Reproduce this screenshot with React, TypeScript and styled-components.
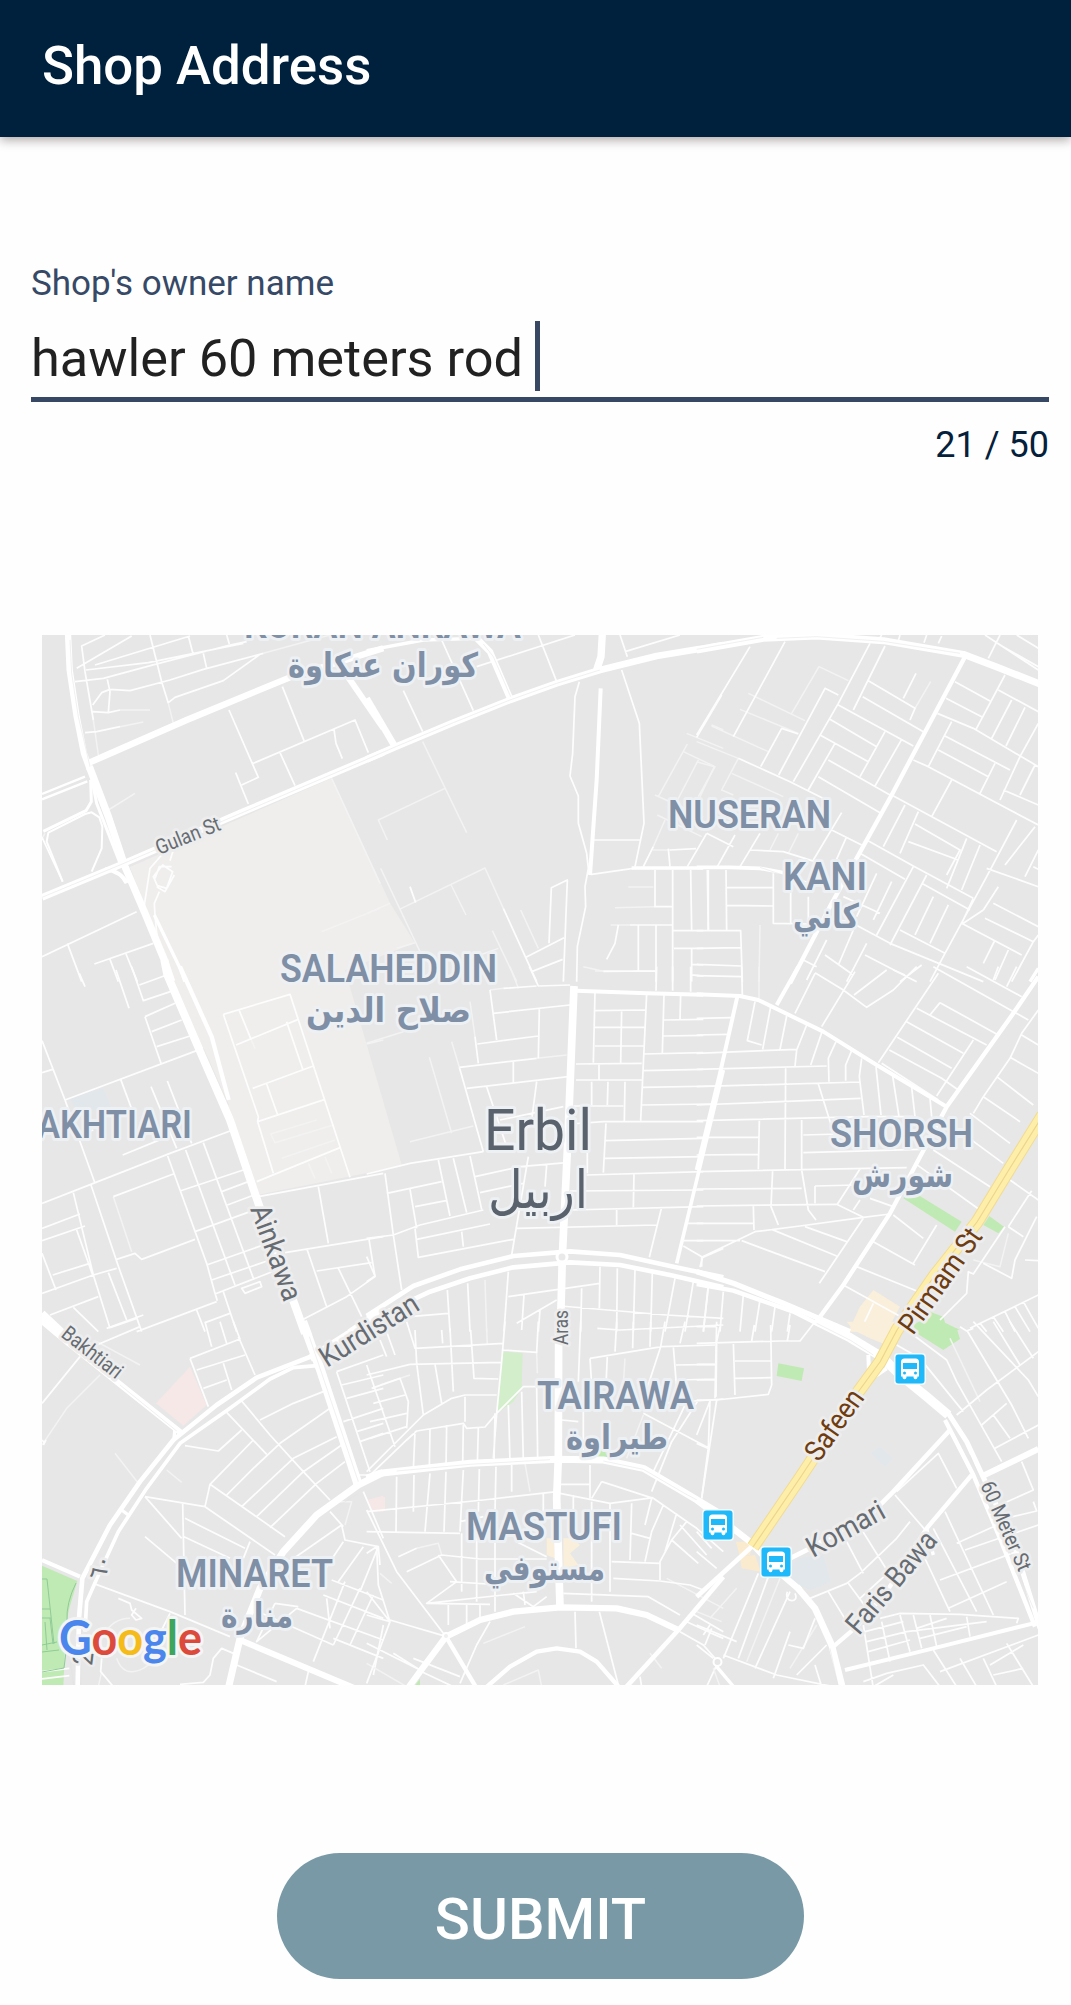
import React from "react";
import styled, { createGlobalStyle } from "styled-components";

const GlobalStyle = createGlobalStyle`
  * { box-sizing: border-box; }
  body { margin: 0; background: #fefefe; font-family: Roboto, "DejaVu Sans", sans-serif; }
`;

const Screen = styled.main`
  display: flex;
  flex-direction: column;
  height: 2005px;
  overflow: hidden;
  background: #fefefe;
`;

const TopBar = styled.header`
  flex: none;
  height: 137px;
  padding: 36px 42px 0;
  background: #00213d;
  box-shadow: 0 3px 10px rgba(30, 10, 10, 0.36);
`;

const Title = styled.h1`
  margin: 0;
  color: #fff;
  font-size: 52.8px;
  font-weight: 500;
  line-height: 60px;
`;

const Field = styled.section`
  display: flex;
  flex-direction: column;
  margin: 127px 22px 0 31px;
`;

const FieldLabel = styled.label`
  color: #364966;
  font-size: 35px;
  line-height: 40px;
`;

const InputRow = styled.div`
  display: flex;
  align-items: flex-start;
  height: 98px;
  padding-top: 17px;
  border-bottom: 5px solid #364863;
`;

const InputText = styled.span`
  padding-top: 2px;
  color: #212121;
  font-size: 52.3px;
  line-height: 70px;
  white-space: pre;
`;

const Caret = styled.span`
  width: 5px;
  height: 70px;
  margin-left: -1px;
  background: #384863;
`;

const Counter = styled.span`
  align-self: flex-end;
  margin-top: 23px;
  color: #04203a;
  font-size: 36px;
  line-height: 40px;
`;

const MapFrame = styled.section`
  flex: none;
  width: 996px;
  height: 1050px;
  margin: 170px 0 0 42px;
  overflow: hidden;
  background: #e7e7e7;
`;

const MapSvg = styled.svg`
  display: block;
  width: 996px;
  height: 1050px;
`;

const Label = styled.text`
  fill: #7f8fa6;
  stroke: #eef1f4;
  stroke-width: 6px;
  stroke-linejoin: round;
  paint-order: stroke;
  font-family: Roboto, sans-serif;
  font-weight: 600;
  font-size: 38.4px;
`;

const ArabicLabel = styled(Label)`
  font-family: "DejaVu Sans", sans-serif;
  font-weight: 700;
  font-size: 34px;
`;

const StreetLabel = styled(Label)<{ $size: number; $tone?: string }>`
  fill: ${(p) => p.$tone ?? "#666c72"};
  stroke: #ededee;
  font-weight: 400;
  font-size: ${(p) => p.$size}px;
`;

const CityLabel = styled(Label)`
  fill: #5a626d;
  font-weight: 400;
  font-size: 57px;
`;

const ArabicCity = styled(ArabicLabel)`
  fill: #5a626d;
  font-weight: 400;
  font-size: 53px;
`;

const Logo = styled.text`
  font-family: Lato, sans-serif;
  font-weight: 700;
  font-size: 47px;
  stroke: #f5f5f5;
  stroke-width: 6px;
  stroke-linejoin: round;
  paint-order: stroke;
`;

const SubmitButton = styled.button`
  flex: none;
  align-self: flex-start;
  width: 527px;
  height: 126px;
  margin: 168px 0 0 277px;
  padding: 6px 0 0;
  border: 0;
  border-radius: 63px;
  background: #7899a5;
  color: #fff;
  font-family: Roboto, sans-serif;
  font-size: 58px;
  font-weight: 500;
  line-height: 120px;
`;

type Area = [string, string];
type Road = [number, string];
interface Tile {
  x: number;
  y: number;
  areas?: Area[];
  minor: string;
  faint?: string;
  roads: Road[];
  seams?: string;
}

const GREEN = "#c0eab3";
const SAND = "#faefda";
const PINK = "#f7e8e8";
const WATER = "#e2e7ec";

/* Each tile is drafted on a grid three times finer than the map itself. */
const tiles: Tile[] = [
  {
    x: 30,
    y: 620,
    minor:
      "M225 45L155 78L165 155L190 300M140 145L305 48M195 135L480 48M168 150L355 128L640 70M135 185L220 175L375 133L600 75L650 65M188 255L215 218L240 208L300 212L420 180L520 148L700 100M360 45L395 185L415 250M415 248L435 232L580 182L690 103M475 48L490 105M590 45L598 72M520 100L530 145M232 178L240 215L235 278M188 275L235 278L270 270M165 338L200 335L270 320M597 270L685 472L635 495M617 458L655 552M757 200L822 362M665 432L975 300L1015 398M750 398L795 497M912 328L918 370L937 416M36 1010L320 875M112 970L155 1085M193 1032L370 970M240 1018L265 1085M288 1002L322 1085M395 705L360 745L343 855M430 690L420 722M398 735L428 755L410 805L382 797L370 770ZM375 775L388 740L425 740M380 800L405 815L433 765M388 815L373 850L375 885L384 980",
    faint:
      "M190 300L205 405M270 270L360 270M270 320L340 306M415 250L430 310M235 570L315 520M905 475L1050 790M875 935L1050 865M700 100L900 45M36 655L45 640",
    roads: [
      [19, "M114 40L119 150L140 290L162 400L180 450"],
      [22, "M178 440L235 590L285 740L345 880L403 1020L425 1085"],
      [9, "M180 450L200 550L270 730"],
      [19, "M178 428L230 405L470 300L780 172L1060 85"],
      [20, "M36 832L270 735L640 575L1060 397"],
      [7, "M36 522L165 470M36 538L172 484"],
      [9, "M182 480L184 545L168 572L40 634"],
      [6, "M98 785L50 665L55 638L165 582L185 577L208 592L217 620L215 685L185 755"],
      [5, "M36 652L98 785"],
      [18, "M950 165L1060 325"],
      [12, "M225 748Q275 755 290 790"],
      [10, "M373 885L450 1045L465 1085"],
    ],
    seams: "M36 832L270 735L1060 397M120 60L125 160L145 290L180 440",
  },
  {
    x: 370,
    y: 620,
    minor:
      "M628 185L615 230L608 400L600 468L625 528L625 610L650 700L655 745L645 800L647 860L622 980L620 1085M755 150L808 310L822 610L795 740M668 660L812 660M665 763L790 745M505 45L560 185M320 140L615 45M750 45L772 110M765 95L930 45M100 212L158 335M215 60L310 272M120 800L137 848M537 970L544 803L592 780L580 1085M465 1013L582 953M485 1055L578 1018M820 740L850 680M952 740L1010 640M900 690L978 686M895 686L900 740M980 352L1055 225M855 750L855 860L908 860M908 750L908 1085M780 915L908 915M745 915L735 970L710 1018M805 915L805 1052M858 915L858 1085M790 1053L855 1053M962 750L965 932M1015 750L1015 932M908 932L1000 932M912 985L1000 985M965 985L965 1085M965 1033L1000 1035M965 1065L1000 1068M400 865L500 1085",
    faint:
      "M158 365L290 638M225 505L25 600L52 660M88 868L345 744L400 865M32 745L150 995M242 792L288 885M452 870L505 985M367 932L440 1085M385 985L330 1005M850 680L885 600M848 690L900 690M950 340L1060 385M1025 315L1060 330M952 372L865 530M940 395L1035 440L985 530M985 420L920 545M855 525L1000 590M862 585L995 650M735 863L855 860M775 801L850 801M722 915L780 915M675 1053L790 1053M-10 880L60 850M80 985L135 968",
    roads: [
      [20, "M-10 418L80 379L250 308L420 240L560 190L690 150L860 108L1060 75"],
      [20, "M-10 235L72 375"],
      [19, "M320 55L360 95L420 235"],
      [10, "M-10 92L160 60L320 55"],
      [22, "M697 40L693 110L680 150"],
      [12, "M692 205L680 480L660 765"],
      [11, "M785 744L1000 744"],
    ],
    seams: "M-10 418L80 379L250 308L420 240L560 190L690 150M340 72L370 110L422 230M985 75L1060 75",
  },
  {
    x: 700,
    y: 620,
    minor:
      "M150 80L-10 345M255 65L100 350M510 70L415 250L280 485M555 78L460 270M236 465L375 205L415 225M182 440L245 325L295 342M115 415L270 485L390 545M505 182L645 265L630 300M610 235L648 160M488 230L670 335M415 255L640 378M390 298L530 380M360 345L505 425M385 420L570 525M355 470L540 578M405 370L325 510M555 335L480 470M605 358L525 498M425 578L340 720M395 630L485 675M440 650L400 740M765 185L870 243M738 235L845 290M712 280L820 325L1015 440M915 165L828 328M895 210L1015 275M935 240L875 355M975 262L918 378M1015 310L960 410L900 540M1005 435L960 525M640 420L685 440L755 305M735 348L930 450M715 390L865 470M685 440L1015 615M885 430L840 520M910 510L1015 555M755 480L695 590M575 525L890 695M950 600L860 770L735 1000M1005 620L915 735M1015 690L975 770M655 575L600 700M615 555L550 680M645 612L780 690L740 765M625 665L775 720M500 660L640 738L820 835M800 655L740 805M840 675L785 810M860 745L1015 800M665 790L810 870M895 800L850 870M880 850L1015 920M855 895L1000 965M785 910L965 1005M1000 965L935 1085M1015 945L1000 965M885 960L850 1030M640 740L530 945M680 765L570 975M480 700L615 778M700 830L645 945M745 855L690 970M600 930L735 1000L690 1085M430 830L540 880M530 760L470 890M575 785L520 900M450 905L570 970L850 1085M500 970L440 1085M495 1005L650 1085M380 960L320 1080M665 1035L600 1085M310 1020L350 1040M375 1005L460 1065M925 990L885 1080M410 900L450 905M460 930L415 1035M220 760L220 910L325 912L325 830M272 790L272 910M78 750L80 930M22 750L25 930M80 803L220 803M80 856L220 858M-10 932L122 932L127 1085M-10 985L122 983M-10 1033L125 1038M52 740L105 645M120 740L180 640M150 690L250 695L345 725M545 45L535 60M600 45L595 62M680 45L672 68M725 48L715 70M900 45L865 115M900 75L1015 140M855 45L1015 150M950 45L1015 85M850 870L790 910M820 835L785 910M1000 740L1015 748M20 640L100 680",
    faint:
      "M275 280L357 140L445 182M145 220L315 302M120 268L295 340M35 318L205 395M-10 365L115 415M-10 425L43 440L0 530M115 415L65 510L100 525M95 460L250 530M645 265L692 185M180 915L177 1085M210 690L235 640M265 700L295 640",
    roads: [
      [21, "M-10 90L190 55L350 48L550 62L790 103L900 145L1020 192"],
      [13, "M795 110L575 525L395 850L270 1090"],
      [11, "M-10 742L90 742L180 745L245 757L330 795"],
      [10, "M1015 1045L990 1085"],
    ],
    seams: "M-10 88L190 52M230 55L350 50L550 64L780 100M180 742L330 792",
  },
  {
    x: 30,
    y: 970,
    minor:
      "M36 212L105 390L195 640M36 308L68 298M105 390L500 242M272 328L310 430M148 10L165 50M258 0L297 115M305 -10L340 92L430 62M328 45L410 15M345 140L435 100M345 140L393 280M365 185L455 150M380 230L480 198M363 350L440 535M412 333L485 520M278 555L400 505M36 700L190 640L420 550L600 483M130 668L190 915L240 1075M183 645L262 880L335 1085M36 775L150 732M36 812L165 768M140 780L188 915M36 850L78 960M68 915L180 880M36 970L190 915L260 895M235 908L290 1050M250 680L430 612M413 558L530 880L555 970M260 868L315 850L335 868L495 808M467 540L615 945M520 518L670 925M450 663L640 600M575 665L655 635M592 705L672 675M495 785L660 725M530 885L700 825M545 930L720 870M555 972L740 900M635 955L690 935L695 950L645 970ZM560 995L320 1085M555 970L562 992M580 965L620 1085M500 1020L525 1085M525 1058L600 1030M60 1035L205 980M130 1012L205 1085M240 1073L320 1045M685 680L1060 610M865 650L895 820M765 848L1060 800M830 835L890 1010M860 903L1025 878M1017 808L1035 920L950 980L820 1048M925 895L995 1040M580 133L780 73L960 622M580 133L685 440L683 455L730 610M628 122L662 205M618 225L805 148M770 155L818 297M668 355L850 288M710 342L743 435M683 455L885 388M680 635L930 533M160 490L190 480",
    faint:
      "M250 680L305 845M662 205L675 235M860 450L722 492L735 518L910 465M755 565L915 510M835 580L855 625M885 560L905 610M1010 222L1060 210",
    areas: [[WATER, "M120 385L220 355L245 415L140 425Z"]],
    roads: [
      [24, "M403 -30L412 15L500 220L600 450L685 700L825 1090"],
      [13, "M450 -10L545 200L596 390"],
      [22, "M36 1030L110 1100"],
      [26, "M960 1090L1060 1020"],
      [11, "M510 235L585 405L590 440"],
    ],
    seams: "M520 235L596 405",
  },
  {
    x: 370,
    y: 970,
    minor:
      "M478 -10L505 48L600 45M400 55L500 48M360 60L380 210M370 130L600 105M508 115L505 265M322 222L505 198M315 200L325 280M268 292L500 265M430 275L430 340M290 355L595 320M268 292L340 545M350 350L410 530M500 335L485 450M390 450L580 410M-10 612L120 580L340 545M45 610L70 795L95 960M205 570L240 738M250 565L290 728M300 558L335 718M50 670L215 635M120 658L140 775M135 710L228 692M-10 805L70 795L150 765L340 720M135 775L145 862L430 808M140 808L360 762M275 785L280 830M315 620L450 590L590 578M330 668L460 640M475 560L425 855M440 775L860 765M530 585L525 650M-10 860L15 918L-10 935M675 68L670 278M675 122L825 120M755 120L752 278M675 172L825 172M675 228L825 228M618 282L815 280M687 282L687 328M618 330L815 330M830 72L812 452M665 335L665 405M714 335L712 405M765 335L763 452M610 408L760 408M600 462L700 455L1000 455M652 460L652 610M708 460L700 608M705 512L1000 505M703 565L1000 560M650 615L1000 605M600 663L1000 660M792 612L790 712M600 720L1000 710M740 720L740 765M875 712L838 862M820 252L1000 248M820 302L1000 298M817 352L1040 348M815 405L1030 402M882 75L877 248M932 75L930 148M882 150L1000 148M880 198L1000 196M950 760L1000 760M940 812L1000 812M940 828L998 862L1060 835M998 862L990 892M700 4L860 3M860 -10L858 62M908 -10L908 62M962 -10L962 65M962 15L1000 18M232 960L240 1085M293 940L300 1085M415 905L402 1085M415 980L690 940M462 975L455 1080M440 1060L560 990M690 890L688 1015M572 1008L890 1035L1060 1045M635 955L632 1085M742 895L740 1085M795 900L790 1085M847 910L842 1085M915 925L885 1085M970 935L945 1085M1015 950L1000 1085M120 1040L235 1030M510 1020L505 1085",
    faint:
      "M178 262L245 490M120 515L310 468M345 930L350 1085M300 95L315 200M245 215L268 292M-10 220L100 185M500 265L590 255M360 60L400 55M420 -10L445 55M640 -10L700 4",
    roads: [
      [23, "M612 48L594 500L577 860L571 1090"],
      [12, "M618 62L830 70L1000 74"],
      [14, "M-10 1038L130 948L270 898L430 858L600 844L750 855L900 888L1060 922"],
      [14, "M30 1035L180 965L300 925L430 892L600 877L750 885L900 915L1060 952"],
      [11, "M1060 300L985 610L920 880"],
    ],
  },
  {
    x: 700,
    y: 970,
    areas: [
      [GREEN, "M625 670L650 672L785 755L765 785L610 685Z"],
      [GREEN, "M868 738L912 770L895 790L850 765Z"],
      [SAND, "M520 960L600 1010L560 1085L445 1085L480 1010Z"],
      [GREEN, "M690 1025L730 1040L735 1058L780 1080L650 1085Z"],
    ],
    minor:
      "M-10 145L95 143M-10 195L85 193M-10 250L290 238M-10 298L380 288M-10 350L480 336M-10 405L482 385M-10 452L500 440L640 440M-10 502L175 502M-10 555L175 553M-10 605L620 593M125 -10L127 75M-10 17L125 20M165 95L142 212L185 225M212 110L188 238M260 138L240 238M320 165L290 240L285 288M365 188L332 285M408 215L385 265L387 335M455 242L437 285L437 332M485 265L478 320L492 435M528 290L543 435M578 318L597 440M635 352L645 440M690 385L695 440M257 295L255 598M178 452L175 598M305 450L305 600L325 720L348 750M355 342L395 470M310 495L420 492M310 548L660 538M-10 657L305 655M218 600L213 710L235 765M345 648L470 645M345 648L345 700M-10 708L410 703L490 742L570 732M480 597L412 703M160 708L162 780M-10 760L160 760M490 742L300 768L165 785L5 862L5 890M-10 812L120 812M490 745L358 940M315 770L440 815M215 778L410 858M125 812L375 905M460 720L480 690M510 685L580 710M345 10L285 130M345 8L430 60L500 112L580 60L650 -10M465 5L365 170M462 75L560 0M580 0L615 15M700 -10L985 150M715 10L535 278M650 115L860 225M720 98L895 195M720 98L690 135M620 155L790 250M592 202L755 295M568 240L725 325L775 360M820 210L710 378M545 280L715 390M800 -10L965 80M895 -10L880 30M950 -10L920 50M1015 120L965 190L930 265L850 380L820 430M965 195L1015 225M930 262L1015 310M893 322L1000 405M850 380L960 455M810 430L930 520M760 470L910 580M700 540L870 650M645 580L840 720M930 630L1015 690M995 662L925 770M1010 740L945 870L935 925L850 880M925 770L970 800M915 770L820 912L805 905L800 970L720 1050M975 870L1015 872M580 735L670 805M710 765L640 880M520 815L645 885M470 890L680 975M430 945L620 1050M520 1000L480 1085M25 945L10 1085M70 965L60 1085M130 975L120 1085M180 990L165 1085M225 1010L215 1085M270 1030L262 1085M-10 1070L50 1070M810 1075L1015 975M840 1060L860 1085M880 1040L910 1085M915 1025L945 1085M945 1010L990 1085M970 995L1015 1075",
    faint: "M177 -10L177 85M925 790L900 890L820 870",
    roads: [
      [12, "M-10 73L120 78L175 90L370 185L530 285L740 410"],
      [12, "M295 -10L230 105"],
      [12, "M112 80L60 310L-10 600"],
      [13, "M1015 20L940 130L740 410L570 730L430 945L360 1040"],
      [16, "M-10 905L100 940L250 1000L450 1085"],
      [13, "M-10 942L100 962L280 1025L360 1065L450 1095"],
    ],
  },
  {
    x: 30,
    y: 1325,
    areas: [
      [PINK, "M480 125L530 240L460 302L378 235Z"],
      [PINK, "M1012 525L1060 512L1060 560L1025 560Z"],
      [GREEN, "M36 722L142 768L118 850L108 900L100 1085L36 1085Z"],
    ],
    minor:
      "M36 235L150 95M480 100L630 42L610 -10M480 100L535 245M500 135L645 90M625 35L675 150M580 115L605 195M520 190L590 165M525 -10L545 65M570 -10L590 55M200 60L330 5M230 10L340 -30M465 362L565 378L635 315M590 262L710 388M635 228L720 330L820 440L900 525M670 345L540 478L525 545L345 515M540 478L765 635M690 285L790 235L880 200M590 510L670 430L750 355L900 250M635 545L790 400L920 335M680 575L820 440L935 360M720 608L860 475L945 410M525 545L735 690M345 515L455 640M345 635L470 740M458 535L465 870M465 580L645 670M660 650L640 700M462 635L600 700M190 775L420 860L600 935M265 820L300 835L305 855L335 880L318 885L305 870L318 850M390 925L420 865M920 140L1020 440M920 140L1060 90M935 180L1060 150M950 220L1060 190M940 290L1060 250M980 320L1060 295M990 350L1060 325M985 450L1020 450M1000 500L1060 640M935 600L945 645L1045 665L1050 720M900 560L940 605M935 600L770 715M940 650L870 755M1000 665L925 770M1045 665L990 800M905 765L1060 825M945 770L850 1010M990 790L910 960M1030 810L960 960M880 810L1060 880M800 850L1060 945M735 835L680 950L800 850M735 835L805 845M695 865L910 960M910 940L1060 1000M890 820L900 910M1060 900L1030 1050M620 1020L740 1070M835 1040L825 1085M450 1078L520 1072L540 1050L550 1000L575 970L610 985M215 1000L212 1040L250 1085M36 1040L118 1030M36 1062L118 1052M36 345L45 355M40 360L48 345",
    faint:
      "M36 360L110 250L210 150M255 385L325 475M410 435L455 472M900 530L965 530L945 600M215 1040L205 1085M200 50L330 120M260 1000Q280 1060 340 1030L400 990M220 930Q250 880 300 880",
    roads: [
      [27, "M818 -10L870 130L985 480"],
      [14, "M850 92L680 158L560 240L430 345L330 470L240 600L157 760L147 880L143 1085"],
      [11, "M860 122L790 128L720 162L600 250L450 355L350 490L265 620L203 755L170 830L165 920"],
      [18, "M20 -25L110 50L260 170L455 325"],
      [21, "M1060 442L985 480L860 570L760 680L690 790L630 940L595 1090"],
      [12, "M36 705L150 755"],
      [18, "M630 945L760 1000L975 1090"],
      [10, "M275 555L295 570"],
      [10, "M435 310L432 340"],
      [22, "M840 100L950 30L1060 -30"],
    ],
    seams: "M838 35L985 470M848 28L870 95M270 180L440 318M120 1000L132 1085M155 900L152 1085M985 505L930 540",
  },
  {
    x: 370,
    y: 1325,
    areas: [
      ["#d2eeca", "M400 80L458 85L455 190L430 230L380 265Z"],
      [GREEN, "M700 370L714 398L645 398L650 375Z"],
      [GREEN, "M132 1085L150 1062L150 1085Z"],
      [PINK, "M-5 525L45 515L45 558L10 560Z"],
      [SAND, "M530 640L552 640L555 700L530 690Z"],
      [SAND, "M580 640L610 640L630 660L600 685L625 720L580 730Z"],
    ],
    minor:
      "M-10 555L80 740L228 935M-10 560L340 525L560 500M-10 620L270 625M135 15L140 115L160 270M215 15L218 55M-10 150L120 118L395 112M110 -10L135 70L400 55M240 10L250 200M302 15L312 160L385 162M405 -10L395 110L380 265L370 400M195 118L215 235M400 75L500 82L505 -10M-10 440L130 300L160 270L245 220L285 210L380 210M-10 460L110 345L140 318L280 295L290 310L345 306L380 265L460 185L510 185M285 215L285 290M180 310L178 430M230 300L228 425M135 320L130 435M280 300L278 420M325 310L322 418M375 265L372 412M415 240L420 408M455 200L460 405M500 185L503 400M0 340L110 305M-10 120L75 365M5 190L90 160L115 230L110 310M10 235L105 210M0 290L110 265M50 20L75 90M30 45L50 95M80 455L78 620M132 450L130 560M180 445L165 620M228 440L222 620M280 435L270 620M328 432L325 560M378 425L375 560M425 420L425 500M520 505L520 560M270 590L340 575M-10 685L20 665L25 780L60 890M320 630L320 830M375 650L375 860M275 625L275 800M85 695L140 670M205 690L260 770L170 835L400 810L500 800M110 740L215 690L330 702L530 702M440 650L530 695M-10 800L60 890L-10 1075M60 885L230 935M-10 955L150 1035M240 770L400 780M170 835L360 838M235 840L235 900M290 840L290 900M330 840L330 880M130 1000L270 1055M155 1040L250 1085M360 890L320 960L270 1075M465 840L460 800M430 805L490 845L530 815M615 860L618 970M688 860L745 1080M632 -10L625 170M682 10L750 15L1060 0M740 -10L735 80M790 -10L788 70M842 -10L840 65M885 -10L872 65L815 240M660 100L875 65L1035 60M660 100L665 180M712 92L708 180M945 -10L930 55M910 65L920 190M918 120L1035 118M925 165L1035 162M1040 -10L1035 220M870 235L1060 222M820 265L1015 368M1020 225L1015 368L995 520M985 225L905 350L845 500M950 230L850 440M575 285L625 290M640 250L640 400M570 478L660 478M660 420L660 520M695 470L665 520M695 470L850 520L980 610L1060 680M570 505L720 535L850 518M720 535L720 800M785 535L780 705M845 520L825 600M880 540L845 620L825 710M920 565L885 680M950 590L905 645L870 710L870 765M725 710L870 715M730 760L870 768L960 780L1000 795M785 625L840 640M905 645L985 715M930 600L1010 690M665 530L665 830M610 510L610 560M580 805L835 815L930 870M965 865L1060 920M950 890L1025 925L1060 940M1025 910L1005 960M930 920L1000 960L1035 1000M1040 1020L1010 1085M810 1055L815 1085M-10 870L60 890M70 985L150 1035",
    faint:
      "M500 82L502 145M30 180L120 150M465 415L480 500M340 955L465 905M400 1080L505 1035L515 1085M765 100L760 180M840 985L875 1030M350 10L352 60M140 670L205 655L215 690M820 270L770 400M-10 1015L110 1085M890 760L1060 850M30 745L65 775",
    roads: [
      [23, "M566 -10L565 400L560 520L570 845"],
      [21, "M-10 460L30 445L300 415L560 403L700 405L820 430L940 500L1060 572"],
      [19, "M110 1095L150 1040L228 935L330 885L430 860L570 847L740 850L830 870L925 915"],
      [13, "M228 935L320 1090"],
      [13, "M345 1090L420 1025L500 980L560 970L630 980L680 1010L750 1090"],
      [14, "M765 1090L925 915L1060 755"],
    ],
    seams: "M80 438L300 418L540 404M700 408L820 433L940 503L990 530",
  },
  {
    x: 700,
    y: 1325,
    areas: [
      [GREEN, "M235 115L312 130L305 168L230 153Z"],
      [GREEN, "M640 0L690 -30L725 10L770 10L780 42L730 75L650 25Z"],
      [SAND, "M440 -10L590 -10L560 60L510 40L460 15Z"],
      ["#faebce", "M108 650L160 650L150 690L120 695ZM120 695L165 690L182 740L125 730Z"],
      [WATER, "M540 365L578 400L555 425L510 385Z"],
      [WATER, "M290 700L370 690L392 770L330 795L255 760Z"],
    ],
    minor:
      "M-10 55L240 48L300 48L345 -10M60 5L50 50L48 215M100 50L105 210M163 0L155 48M212 0L215 180L205 208L50 225L-10 225M105 108L212 108M105 160L212 158M-10 118L45 118M-10 165L45 165M270 0L262 48M50 225L5 520M30 228L-10 330M-10 355L25 370M590 60L660 100L790 260M640 30L740 105L770 170L905 410M820 -10L985 165L1015 215M800 15L935 240L985 340M780 5L800 18L820 10M880 -10L960 120M930 -10L1000 100M770 270L860 195L1015 80M845 300L920 235M880 270L930 340M885 370L1015 300M590 500L715 385L770 490M585 510L680 620M630 590L590 640L480 745L440 775L330 820M440 650L490 745M470 590L570 750M480 820L590 720M735 560L880 870M700 610L830 860M670 690L750 860M965 410L1000 495L900 540M770 655L880 605M795 675L1015 600M720 765L950 680M745 850L920 770M915 580L1010 558L1000 530M385 800L440 890M445 775L500 850M540 880L600 865L780 868L955 880L950 895M490 900L520 1090M545 890L570 1010M600 870L630 980M640 870L665 970M690 870L710 965M800 875L810 935M500 950L620 920L860 890M505 980L630 945M495 920L610 890M650 910L740 880M660 940L800 905M490 1070L560 1045L670 1020L720 1085M520 1085L580 1050M700 975L770 1085M780 1000L830 1085M850 1000L890 1085M920 955L1000 1085M870 1020L970 960M720 1040L1015 930M880 1050L970 1030M175 745L70 1000M205 755L115 1000M270 800L165 1030M345 880L310 970L265 960M380 960L290 1050M70 990L230 1050L400 1085M270 920L220 1060M345 1020L365 1085M40 1000L-10 960M-10 900L110 950M10 930L30 900M35 670L-10 620M-10 680L50 730M262 800C250 835 300 835 285 805",
    faint: "M240 760L140 1010M110 790L30 880M-10 860L65 890M750 40L840 230M40 1030L60 1085M350 900L270 1030",
    roads: [
      [28, "M345 -15L450 38L545 95L600 150L680 215L745 270"],
      [15, "M745 265L800 350L870 500L940 650L1020 910"],
      [13, "M735 285L820 450L900 640L1005 905"],
      [12, "M505 90L508 165L560 130"],
      [19, "M-10 525L60 580L150 650L235 740L300 795"],
      [20, "M290 785L345 850L395 960L428 1090"],
      [14, "M-10 815L155 665"],
      [14, "M270 700L330 670L520 560L580 500L750 315"],
      [13, "M400 965L470 905L560 800L680 610L815 450"],
      [18, "M850 452L1015 372"],
      [12, "M435 1035L700 970L1000 895L1015 890"],
      [10, "M50 1025L105 1090"],
      [10, "M680 610L700 690"],
    ],
    seams: "M350 -5L450 45L520 90M810 390L1000 850M390 970L415 1085",
  },
];

interface PlaceName {
  text: string;
  x: number;
  y: number;
  w: number;
}

const districts: PlaceName[] = [
  { text: "KORAN ANKAWA", x: 244, y: 638, w: 277 },
  { text: "NUSERAN", x: 668, y: 828, w: 163 },
  { text: "KANI", x: 783, y: 890, w: 84 },
  { text: "SALAHEDDIN", x: 280, y: 982, w: 217 },
  { text: "AKHTIARI", x: 37, y: 1138, w: 155 },
  { text: "SHORSH", x: 830, y: 1147, w: 143 },
  { text: "TAIRAWA", x: 537, y: 1409, w: 157 },
  { text: "MASTUFI", x: 466, y: 1540, w: 156 },
  { text: "MINARET", x: 176, y: 1587, w: 157 },
];

const arabicDistricts: PlaceName[] = [
  { text: "كوران عنكاوة", x: 288, y: 677, w: 190 },
  { text: "كاني", x: 793, y: 928, w: 66 },
  { text: "صلاح الدين", x: 306, y: 1022, w: 165 },
  { text: "شورش", x: 852, y: 1187, w: 101 },
  { text: "طيراوة", x: 566, y: 1449, w: 102 },
  { text: "مستوفي", x: 484, y: 1580, w: 121 },
  { text: "منارة", x: 221, y: 1627, w: 72 },
];

interface Street extends PlaceName {
  angle: number;
  size: number;
  tone?: string;
}

const BROWN = "#6e3c0e";
const streets: Street[] = [
  { text: "Gulan St", x: 159, y: 855, w: 68, angle: -22, size: 21 },
  { text: "Ainkawa", x: 250, y: 1209, w: 100, angle: 70, size: 29 },
  { text: "Kurdistan", x: 327, y: 1368, w: 111, angle: -32, size: 29 },
  { text: "Aras", x: 568, y: 1345, w: 35, angle: -90, size: 21 },
  { text: "Bakhtiari", x: 60, y: 1336, w: 71, angle: 38, size: 21 },
  { text: "Pirmam St", x: 913, y: 1336, w: 122, angle: -54.7, size: 29, tone: BROWN },
  { text: "Safeen", x: 819, y: 1463, w: 80, angle: -54.7, size: 29, tone: BROWN },
  { text: "Komari", x: 813, y: 1558, w: 85, angle: -29, size: 29 },
  { text: "Faris Bawa", x: 859, y: 1636, w: 124, angle: -50, size: 29 },
  { text: "60 Meter St", x: 980, y: 1485, w: 96, angle: 66, size: 21 },
  { text: "2", x: 92, y: 1666, w: 13, angle: -83, size: 28 },
];

const busStops = [
  [895, 1354],
  [703, 1510],
  [761, 1547],
];

const BusStop = ({ x, y }: { x: number; y: number }) => (
  <g transform={`translate(${x} ${y})`}>
    <rect x="-1" y="-1" width="32" height="32" rx="4" fill="#f2f8fb" />
    <rect x="0.5" y="0.5" width="29" height="29" rx="3" fill="#1fb8f8" />
    <path
      d="M9.500 4.500h11q3.500 0 3.500 3.500V22.500h-1.500q0 2.800-2 2.800t-2-2.800h-7q0 2.800-2 2.800t-2-2.800H6V8q0-3.500 3.500-3.500z"
      fill="#fff"
    />
    <rect x="8" y="9" width="14" height="6" fill="#1fb8f8" />
    <circle cx="9.500" cy="19" r="1.500" fill="#1fb8f8" />
    <circle cx="20.500" cy="19" r="1.500" fill="#1fb8f8" />
  </g>
);

const highway = "M1043 1115L1010 1168L977 1222L935 1275L897 1330L880 1362L845 1410L800 1478L753 1547";

const CityMap = () => (
  <MapSvg viewBox="42 635 996 1050" fill="none" strokeLinejoin="round">
    <path d="M332 778L390 903L415 943L345 970L402 1166L257 1195L130 867Z" fill="#efeeec" />
    {tiles.map((t) => (
      <g key={`a${t.x}-${t.y}`} transform={`translate(${t.x} ${t.y}) scale(0.33333)`}>
        {t.areas?.map(([fill, d]) => (
          <path key={d} d={d} fill={fill} />
        ))}
        {t.faint && <path d={t.faint} stroke="#f3f3f3" strokeWidth={4.500} />}
        <path d={t.minor} stroke="#fdfdfd" strokeWidth={5.2} />
      </g>
    ))}
    <path
      d="M42 1579h5l7 65M42 1609h8M42 1618h9M45 1622l2 28M50 1618l3 26M42 1645l15-3M42 1652l17-2M76 1583q-10 20-9 38M42 1672l22-4l2-16"
      stroke="#8fcb98"
      strokeWidth="1"
    />
    {tiles.map((t) => (
      <g key={`r${t.x}-${t.y}`} transform={`translate(${t.x} ${t.y}) scale(0.33333)`}>
        {t.roads.map(([w, d]) => (
          <path key={d} d={d} stroke="#fff" strokeWidth={w} />
        ))}
        {t.seams && <path d={t.seams} stroke="#e2e2e2" strokeWidth={1.6} />}
      </g>
    ))}
    <circle cx="562" cy="1257" r="5" fill="#e9e9e9" stroke="#fff" strokeWidth="3" />
    <circle cx="717.500" cy="1662" r="4" fill="#e7e7e7" stroke="#fff" strokeWidth="2" />
    <circle cx="446" cy="1636" r="3" fill="#efefef" stroke="#fff" strokeWidth="2" />
    <path d={highway} stroke="#f2db92" strokeWidth="13" />
    <path d={highway} stroke="#fdefa9" strokeWidth="11" />
    <path d={highway} stroke="#edd58c" strokeWidth="1.200" />
    {busStops.map(([x, y]) => (
      <BusStop key={x} x={x} y={y} />
    ))}
    {streets.map((s) => (
      <StreetLabel
        key={s.text}
        $size={s.size}
        $tone={s.tone}
        transform={`translate(${s.x} ${s.y}) rotate(${s.angle})`}
        textLength={s.w}
        lengthAdjust="spacingAndGlyphs"
      >
        {s.text}
      </StreetLabel>
    ))}
    <StreetLabel $size={24} transform="translate(104 1582) rotate(-72)">
      ٦٠
    </StreetLabel>
    {districts.map((d) => (
      <Label key={d.text} x={d.x} y={d.y} textLength={d.w} lengthAdjust="spacingAndGlyphs">
        {d.text}
      </Label>
    ))}
    {arabicDistricts.map((d) => (
      <ArabicLabel key={d.text} x={d.x} y={d.y} textLength={d.w} lengthAdjust="spacingAndGlyphs">
        {d.text}
      </ArabicLabel>
    ))}
    <CityLabel x={484} y={1150} textLength={108} lengthAdjust="spacingAndGlyphs">
      Erbil
    </CityLabel>
    <ArabicCity x={488} y={1208} textLength={100} lengthAdjust="spacingAndGlyphs">
      اربيل
    </ArabicCity>
    <Logo x={59} y={1655} textLength={143} lengthAdjust="spacingAndGlyphs">
      <tspan fill="#4a86ec">G</tspan>
      <tspan fill="#dc4a3c">o</tspan>
      <tspan fill="#f4bb1a">o</tspan>
      <tspan fill="#4a86ec">g</tspan>
      <tspan fill="#3fa45c">l</tspan>
      <tspan fill="#dc4a3c">e</tspan>
    </Logo>
  </MapSvg>
);

export default function App() {
  return (
    <Screen>
      <GlobalStyle />
      <TopBar>
        <Title>Shop Address</Title>
      </TopBar>
      <Field>
        <FieldLabel>Shop's owner name</FieldLabel>
        <InputRow>
          <InputText>{"hawler 60 meters rod "}</InputText>
          <Caret />
        </InputRow>
        <Counter>21 / 50</Counter>
      </Field>
      <MapFrame>
        <CityMap />
      </MapFrame>
      <SubmitButton>SUBMIT</SubmitButton>
    </Screen>
  );
}
